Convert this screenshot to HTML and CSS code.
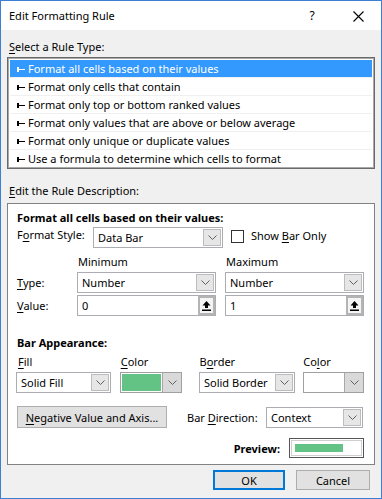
FILE: index.html
```html
<!DOCTYPE html>
<html lang="en">
<head>
    <meta charset="UTF-8">
    <meta name="viewport" content="width=device-width, initial-scale=1.0">
    <title>Edit Formatting Rule</title>
    <link rel="stylesheet" href="styles.css">
</head>
<body>
    <div class="window">
        <div class="titlebar">
            <span class="title">Edit Formatting Rule</span>
            <span class="help">?</span>
            <span class="close">
                <svg width="11" height="11" viewBox="0 0 11 11"><path d="M0.5 0.5L10.5 10.5M10.5 0.5L0.5 10.5" stroke="#000" stroke-width="1.1" fill="none"/></svg>
            </span>
        </div>

        <div class="content">
            <div class="section-label"><u>S</u>elect a Rule Type:</div>
            <ul class="rule-list">
                <li class="selected"><svg class="arrow" width="8" height="5" viewBox="0 0 8 5"><path d="M0 0h2v2h6v1h-6v2h-2z"/></svg>Format all cells based on their values</li>
                <li><svg class="arrow" width="8" height="5" viewBox="0 0 8 5"><path d="M0 0h2v2h6v1h-6v2h-2z"/></svg>Format only cells that contain</li>
                <li><svg class="arrow" width="8" height="5" viewBox="0 0 8 5"><path d="M0 0h2v2h6v1h-6v2h-2z"/></svg>Format only top or bottom ranked values</li>
                <li><svg class="arrow" width="8" height="5" viewBox="0 0 8 5"><path d="M0 0h2v2h6v1h-6v2h-2z"/></svg>Format only values that are above or below average</li>
                <li><svg class="arrow" width="8" height="5" viewBox="0 0 8 5"><path d="M0 0h2v2h6v1h-6v2h-2z"/></svg>Format only unique or duplicate values</li>
                <li><svg class="arrow" width="8" height="5" viewBox="0 0 8 5"><path d="M0 0h2v2h6v1h-6v2h-2z"/></svg>Use a formula to determine which cells to format</li>
            </ul>

            <div class="section-label desc-label"><u>E</u>dit the Rule Description:</div>
            <div class="desc">
                <div class="heading">Format all cells based on their values:</div>

                <div class="style-row">
                    <span class="style-label">F<u>o</u>rmat Style:</span>
                    <div class="combo style-combo">
                        <span class="combo-text">Data Bar</span>
                        <span class="drop"><svg width="9" height="5" viewBox="0 0 9 5"><path d="M0.5 0.5L4.5 4.5L8.5 0.5" stroke="#606060" fill="none"/></svg></span>
                    </div>
                    <span class="checkbox"></span>
                    <span class="check-label">Show <u>B</u>ar Only</span>
                </div>

                <div class="minmax">
                    <span></span>
                    <span class="col-head">Minimum</span>
                    <span class="col-head">Maximum</span>

                    <span class="row-label"><u>T</u>ype:</span>
                    <div class="combo">
                        <span class="combo-text">Number</span>
                        <span class="drop"><svg width="9" height="5" viewBox="0 0 9 5"><path d="M0.5 0.5L4.5 4.5L8.5 0.5" stroke="#606060" fill="none"/></svg></span>
                    </div>
                    <div class="combo">
                        <span class="combo-text">Number</span>
                        <span class="drop"><svg width="9" height="5" viewBox="0 0 9 5"><path d="M0.5 0.5L4.5 4.5L8.5 0.5" stroke="#606060" fill="none"/></svg></span>
                    </div>

                    <span class="row-label"><u>V</u>alue:</span>
                    <div class="combo">
                        <span class="combo-text">0</span>
                        <span class="ref-btn"><svg width="9" height="10" viewBox="0 0 9 10"><path d="M4.5 0L8.5 4.5H6V7H3V4.5H0.5Z M0 8.5H9V10H0Z" fill="#000"/></svg></span>
                    </div>
                    <div class="combo">
                        <span class="combo-text">1</span>
                        <span class="ref-btn"><svg width="9" height="10" viewBox="0 0 9 10"><path d="M4.5 0L8.5 4.5H6V7H3V4.5H0.5Z M0 8.5H9V10H0Z" fill="#000"/></svg></span>
                    </div>
                </div>

                <div class="heading bar-heading">Bar Appearance:</div>

                <div class="appearance">
                    <span class="fill-col"><u>F</u>ill</span>
                    <span class="color-col"><u>C</u>olor</span>
                    <span class="border-col">B<u>o</u>rder</span>
                    <span class="color2-col">Co<u>l</u>or</span>
                </div>
                <div class="appearance combos">
                    <div class="combo fill-col">
                        <span class="combo-text">Solid Fill</span>
                        <span class="drop"><svg width="9" height="5" viewBox="0 0 9 5"><path d="M0.5 0.5L4.5 4.5L8.5 0.5" stroke="#606060" fill="none"/></svg></span>
                    </div>
                    <div class="combo color-combo color-col">
                        <span class="swatch"></span>
                        <span class="color-drop"><svg width="9" height="5" viewBox="0 0 9 5"><path d="M0.5 0.5L4.5 4.5L8.5 0.5" stroke="#606060" fill="none"/></svg></span>
                    </div>
                    <div class="combo border-col">
                        <span class="combo-text">Solid Border</span>
                        <span class="drop"><svg width="9" height="5" viewBox="0 0 9 5"><path d="M0.5 0.5L4.5 4.5L8.5 0.5" stroke="#606060" fill="none"/></svg></span>
                    </div>
                    <div class="combo color-combo color2-col">
                        <span class="swatch empty"></span>
                        <span class="color-drop"><svg width="9" height="5" viewBox="0 0 9 5"><path d="M0.5 0.5L4.5 4.5L8.5 0.5" stroke="#606060" fill="none"/></svg></span>
                    </div>
                </div>

                <div class="direction-row">
                    <button class="btn axis-btn"><u>N</u>egative Value and Axis...</button>
                    <span class="dir-label">Bar <u>D</u>irection:</span>
                    <div class="combo dir-combo">
                        <span class="combo-text">Context</span>
                        <span class="drop"><svg width="9" height="5" viewBox="0 0 9 5"><path d="M0.5 0.5L4.5 4.5L8.5 0.5" stroke="#606060" fill="none"/></svg></span>
                    </div>
                </div>

                <div class="preview-row">
                    <span class="preview-label">Preview:</span>
                    <div class="preview">
                        <div class="preview-inner"><div class="preview-bar"></div></div>
                    </div>
                </div>
            </div>

            <div class="buttons">
                <button class="btn dialog-btn default">OK</button>
                <button class="btn dialog-btn cancel">Cancel</button>
            </div>
        </div>
    </div>
</body>
</html>
```

FILE: styles.css
```css
* {
    box-sizing: border-box;
}
body {
    margin: 0;
    font-family: 'Noto Sans', 'Liberation Sans', sans-serif;
    font-size: 11px;
    color: #000;
    background: #fff;
}
u {
    text-decoration-thickness: 1px;
    text-underline-offset: 2px;
}
.window {
    width: 382px;
    height: 499px;
    border: 1px solid #3c80d6;
    background: #f0f0f0;
}
.titlebar {
    height: 29px;
    background: #fff;
    display: flex;
    align-items: center;
    padding-left: 8px;
}
.title {
    flex: 1;
    font-size: 11px;
}
.help {
    width: 14px;
    text-align: center;
    font-size: 12px;
    margin-right: 34px;
}
.close {
    display: flex;
    margin-right: 17px;
    margin-top: 1px;
}
.content {
    padding: 9px 6px 0 6px;
}
.section-label {
    line-height: 16px;
    padding-left: 2px;
}
.desc-label {
    margin-top: 14px;
}

/* rule type list */
.rule-list {
    list-style: none;
    margin: 2px 0 0 0;
    padding: 2px 2px 1px 2px;
    background: #fff;
    border: 1px solid #6a6a6a;
    box-shadow: inset 0 0 0 1px #a8a8a8;
}
.rule-list li {
    height: 18px;
    line-height: 17px;
    border-bottom: 1px solid #f0f0f0;
    display: flex;
    align-items: center;
    padding-left: 7px;
    white-space: nowrap;
}
.rule-list li:last-child {
    height: 17px;
    border-bottom: none;
}
.rule-list li.selected {
    background: #3399ff;
    color: #fff;
}
.arrow {
    fill: #000;
    margin-right: 3px;
    margin-top: 1px;
}
.selected .arrow {
    fill: #fff;
}

/* description box */
.desc {
    margin-top: 4px;
    height: 262px;
    background: #fff;
    border: 1px solid #828282;
    padding: 6px 10px 0 9px;
}
.heading {
    font-weight: bold;
    line-height: 16px;
}
.style-row {
    display: flex;
    align-items: flex-start;
    margin-top: 1px;
    height: 21px;
}
.style-label {
    width: 76px;
    line-height: 16px;
}
.style-combo {
    width: 130px;
}
.checkbox {
    width: 13px;
    height: 13px;
    border: 1px solid #333;
    background: #fff;
    margin-left: 8px;
    margin-top: 3px;
}
.check-label {
    margin-left: 7px;
    line-height: 18px;
}

.combo {
    height: 21px;
    border: 1px solid #abadb3;
    background: #fff;
    display: flex;
    align-items: center;
}
.combo-text {
    flex: 1;
    padding-left: 4px;
    white-space: nowrap;
    overflow: hidden;
}
.drop {
    width: 18px;
    height: 17px;
    margin-right: 1px;
    background: #e6e6e6;
    border: 1px solid #bcbcbc;
    display: flex;
    align-items: center;
    justify-content: center;
}
.ref-btn {
    width: 17px;
    height: 19px;
    background: #f4f4f4;
    border: 2px solid #b4b4b4;
    display: flex;
    align-items: center;
    justify-content: center;
}

.minmax {
    display: grid;
    grid-template-columns: 51px 139px 139px;
    column-gap: 9px;
    align-items: center;
    margin-top: 6px;
}
.col-head {
    line-height: 16px;
    padding-left: 1px;
    margin-bottom: 2px;
}
.minmax .combo {
    margin-bottom: 2px;
}
.row-label {
    line-height: 16px;
    margin-bottom: 2px;
}

.bar-heading {
    margin-top: 17px;
}
.appearance {
    display: flex;
    line-height: 16px;
    margin-top: 3px;
}
.appearance.combos {
    margin-top: 2px;
    margin-left: -1px;
}
.fill-col {
    width: 95px;
}
.color-col {
    width: 62px;
    margin-left: 9px;
}
.border-col {
    width: 96px;
    margin-left: 17px;
}
.color2-col {
    width: 61px;
    margin-left: 8px;
}
.appearance span.fill-col {
    padding-left: 1px;
}
.color-combo {
    border: 1px solid #a0a0a0;
    align-items: stretch;
}
.swatch {
    flex: 1;
    margin: 1px;
    background: #63c384;
}
.swatch.empty {
    background: #fff;
}
.color-drop {
    width: 19px;
    background: #d9d9d9;
    border-left: 1px solid #a8a8a8;
    display: flex;
    align-items: center;
    justify-content: center;
}

.btn {
    font-family: inherit;
    font-size: 11px;
    color: #000;
    background: #e1e1e1;
    border: 1px solid #adadad;
    padding: 0;
}
.direction-row {
    display: flex;
    align-items: center;
    margin-top: 13px;
}
.axis-btn {
    width: 150px;
    height: 22px;
}
.dir-label {
    margin-left: 20px;
}
.dir-combo {
    width: 97px;
    margin-left: auto;
    margin-right: 1px;
}

.preview-row {
    display: flex;
    justify-content: flex-end;
    align-items: center;
    margin-top: 10px;
}
.preview-label {
    font-weight: bold;
    margin-right: 9px;
}
.preview {
    width: 75px;
    height: 20px;
    border: 1px solid #555;
    padding: 1px;
    background: #fff;
}
.preview-inner {
    height: 100%;
    border: 1px solid #cfcfcf;
    padding: 3px;
}
.preview-bar {
    width: 48px;
    height: 8px;
    background: #63c384;
}

.buttons {
    display: flex;
    justify-content: flex-end;
    margin-top: 5px;
    padding-right: 5px;
}
.dialog-btn {
    height: 20px;
}
.default {
    width: 72px;
    border: 2px solid #0078d7;
}
.cancel {
    width: 74px;
    margin-left: 11px;
}
```
